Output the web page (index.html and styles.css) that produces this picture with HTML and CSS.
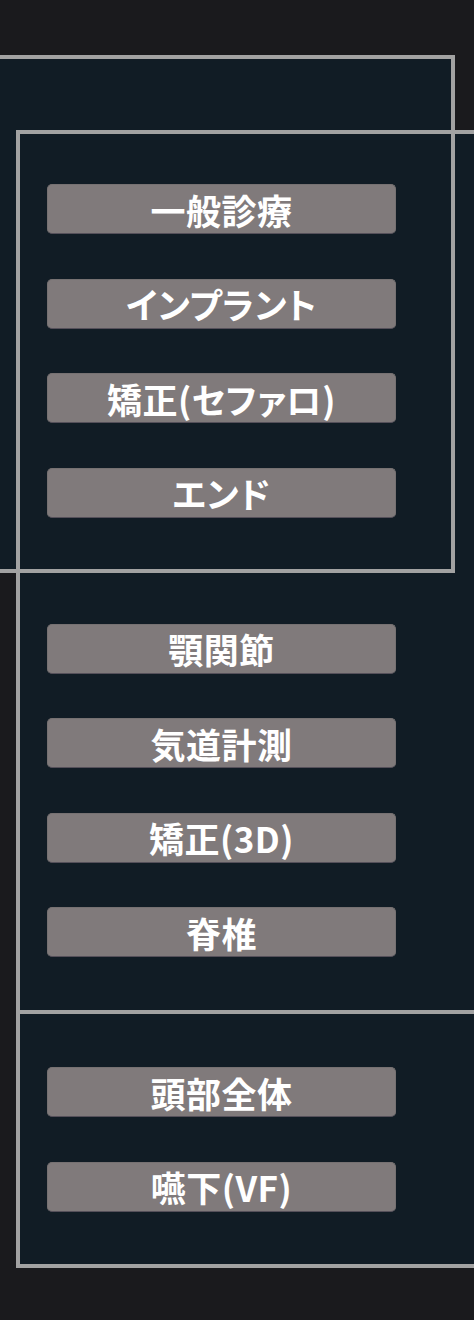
FILE: index.html
```html
<!DOCTYPE html>
<html lang="ja">
<head>
    <meta charset="UTF-8">
    <meta name="viewport" content="width=device-width, initial-scale=1.0">
    <title>撮影メニュー</title>
    <link rel="stylesheet" href="styles.css">
</head>
<body>
    <main class="panel">
        <section class="group group-first">
            <div class="focus-frame"></div>
            <button class="menu-btn">一般診療</button>
            <button class="menu-btn">インプラント</button>
            <button class="menu-btn">矯正(セファロ)</button>
            <button class="menu-btn">エンド</button>
        </section>
        <section class="group">
            <button class="menu-btn">顎関節</button>
            <button class="menu-btn">気道計測</button>
            <button class="menu-btn">矯正(3D)</button>
            <button class="menu-btn">脊椎</button>
        </section>
    </main>
    <section class="panel panel-bottom group">
        <button class="menu-btn">頭部全体</button>
        <button class="menu-btn">嚥下(VF)</button>
    </section>
</body>
</html>
```

FILE: styles.css
```css
body {
    margin: 0;
    padding: 0;
    background-color: #1a1a1d;
    font-family: "Noto Sans CJK JP", "Noto Sans", sans-serif;
    overflow-x: hidden;
}

.panel {
    margin: 130px 0 0 16px;
    background-color: #111c25;
    border: 4px solid #a2a2a2;
    border-right: none;
}

.panel-bottom {
    margin-top: 0;
    border-top: none;
}

.group {
    display: flex;
    flex-direction: column;
    gap: 44.5px;
    padding: 53.5px 0 52.5px;
}

.group-first {
    position: relative;
    padding-top: 50px;
}

/* selection frame around the first group */
.focus-frame {
    position: absolute;
    top: -79px;
    bottom: -3px;
    left: -40px;
    right: 19px;
    border: 4px solid #a2a2a2;
}

.focus-frame::before {
    content: '';
    position: absolute;
    top: 0;
    left: 0;
    right: 0;
    bottom: 0;
    z-index: -1;
    background-color: #111c25;
}

.menu-btn {
    display: block;
    width: 349px;
    height: 50px;
    margin: 0 0 0 27px;
    padding: 0;
    background-color: #807a7b;
    border: 1px solid #767172;
    border-bottom-color: #55505a;
    border-radius: 5px;
    color: #fff;
    font-family: "Noto Sans CJK JP", "Noto Sans", sans-serif;
    font-size: 35px;
    font-weight: 700;
    font-feature-settings: "palt";
    letter-spacing: 0.5px;
    line-height: 1;
    text-align: center;
    cursor: pointer;
}
```
